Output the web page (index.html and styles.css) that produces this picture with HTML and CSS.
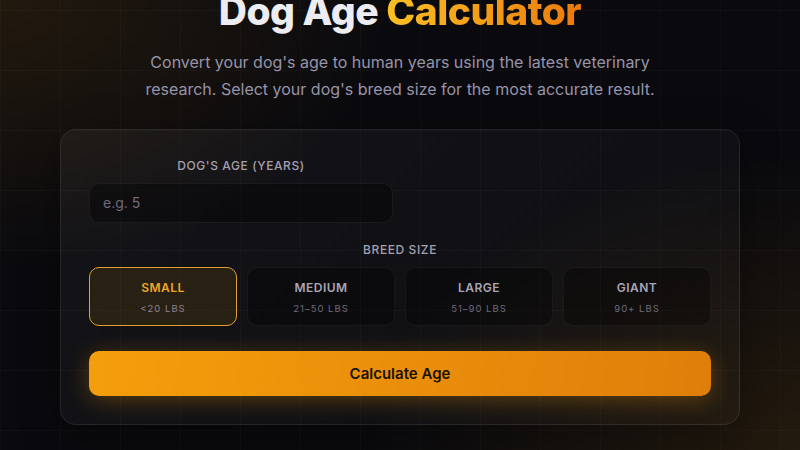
FILE: index.html
```html
<!DOCTYPE html>
<html lang="en">
<head>
    <meta charset="UTF-8">
    <meta name="viewport" content="width=device-width, initial-scale=1.0">
    <title>Dog Age Calculator</title>
    <link rel="stylesheet" href="styles.css">
</head>
<body>
    <div class="page">
        <header class="hero">
            <h1>Dog Age <span class="accent">Calculator</span></h1>
            <p class="subtitle">Convert your dog's age to human years using the latest veterinary research. Select your dog's breed size for the most accurate result.</p>
        </header>

        <section class="card">
            <div class="field-row">
                <div class="field">
                    <label class="label" for="age">Dog's Age (Years)</label>
                    <input id="age" class="input" type="text" placeholder="e.g. 5">
                </div>
            </div>

            <div class="field breed">
                <span class="label">Breed Size</span>
                <div class="sizes">
                    <button class="size active">
                        <span class="size-name">Small</span>
                        <span class="size-range">&lt;20 lbs</span>
                    </button>
                    <button class="size">
                        <span class="size-name">Medium</span>
                        <span class="size-range">21–50 lbs</span>
                    </button>
                    <button class="size">
                        <span class="size-name">Large</span>
                        <span class="size-range">51–90 lbs</span>
                    </button>
                    <button class="size">
                        <span class="size-name">Giant</span>
                        <span class="size-range">90+ lbs</span>
                    </button>
                </div>
            </div>

            <button class="calc-btn">Calculate Age</button>
        </section>
    </div>
</body>
</html>
```

FILE: styles.css
```css
:root {
    --amber: #f59e0b;
    --amber-dark: #d97706;
    --text: #ececf1;
    --muted: #9893a8;
    --bg: #0a0a0e;
}

* {
    box-sizing: border-box;
    margin: 0;
    padding: 0;
}

html, body {
    height: 100%;
}

body {
    font-family: Inter, 'Noto Sans', sans-serif;
    color: var(--text);
    background-color: var(--bg);
    background-image:
        linear-gradient(rgba(255, 255, 255, 0.022) 1px, transparent 1px),
        linear-gradient(90deg, rgba(255, 255, 255, 0.022) 1px, transparent 1px),
        radial-gradient(ellipse 560px 380px at 0% 0%, rgba(245, 158, 11, 0.1), transparent 70%),
        radial-gradient(ellipse 620px 420px at 100% 100%, rgba(245, 158, 11, 0.11), transparent 70%);
    background-size: 60px 60px, 60px 60px, 100% 100%, 100% 100%;
    background-position: 0 10px, 0 0, 0 0, 0 0;
    overflow: hidden;
}

.page {
    max-width: 680px;
    margin: 0 auto;
}

/* title block */
.hero {
    text-align: center;
}

h1 {
    margin-top: -12px;
    margin-bottom: 14px;
    font-size: 39px;
    line-height: 1.2;
    font-weight: 800;
    letter-spacing: -0.5px;
    color: #ececf1;
}

.accent {
    background: linear-gradient(90deg, #fbbf24, #ea7a0c);
    -webkit-background-clip: text;
    background-clip: text;
    color: transparent;
}

.subtitle {
    max-width: 520px;
    margin: 0 auto;
    font-size: 16px;
    line-height: 27px;
    color: var(--muted);
}

/* calculator card */
.card {
    margin-top: 26px;
    padding: 28px;
    background: linear-gradient(135deg, rgba(255, 255, 255, 0.045), rgba(255, 255, 255, 0.02));
    border: 1px solid rgba(255, 255, 255, 0.08);
    border-radius: 16px;
    box-shadow: 0 10px 40px rgba(0, 0, 0, 0.35);
}

.field-row {
    display: grid;
    grid-template-columns: 1fr 1fr;
    gap: 14px;
}

.field {
    display: flex;
    flex-direction: column;
    align-items: stretch;
}

.label {
    display: block;
    text-align: center;
    font-size: 12px;
    line-height: 16px;
    font-weight: 500;
    letter-spacing: 0.6px;
    text-transform: uppercase;
    color: #a4a0b0;
    margin-bottom: 9px;
}

.input {
    height: 40px;
    padding: 0 13px;
    font-family: inherit;
    font-size: 14px;
    color: var(--text);
    background: rgba(0, 0, 0, 0.35);
    border: 1px solid rgba(255, 255, 255, 0.06);
    border-radius: 10px;
    outline: none;
}

.input::placeholder {
    color: #6f6b7a;
}

.breed {
    margin-top: 19px;
}

.breed .label {
    margin-bottom: 9px;
}

.sizes {
    display: grid;
    grid-template-columns: repeat(4, 1fr);
    gap: 10px;
}

.size {
    height: 59px;
    padding-top: 4px;
    display: flex;
    flex-direction: column;
    align-items: center;
    justify-content: center;
    gap: 6px;
    font-family: inherit;
    background: rgba(0, 0, 0, 0.3);
    border: 1px solid rgba(255, 255, 255, 0.05);
    border-radius: 10px;
    cursor: pointer;
}

.size-name {
    font-size: 12px;
    line-height: 16px;
    font-weight: 600;
    letter-spacing: 0.5px;
    text-transform: uppercase;
    color: #a9a5b5;
}

.size-range {
    font-size: 9.5px;
    line-height: 14px;
    letter-spacing: 1px;
    text-transform: uppercase;
    color: #6e6a78;
}

.size.active {
    background: rgba(245, 158, 11, 0.1);
    border-color: #e0a030;
}

.size.active .size-name {
    color: #eea624;
}

.size.active .size-range {
    color: #8a8290;
}

.calc-btn {
    display: block;
    width: 100%;
    height: 45px;
    margin-top: 25px;
    font-family: inherit;
    font-size: 15px;
    font-weight: 600;
    color: #1a1205;
    background: linear-gradient(100deg, #f59e0b, #df7f0a);
    border: none;
    border-radius: 10px;
    box-shadow: 0 4px 22px rgba(245, 158, 11, 0.3);
    cursor: pointer;
}
```
